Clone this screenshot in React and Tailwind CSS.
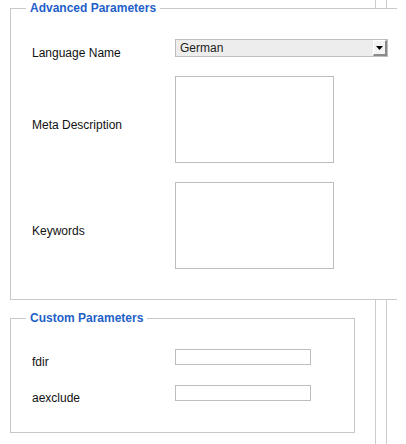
import React from 'react'

function Row({ label, top, children }) {
  return (
    <div className={`flex items-center pl-[21px] ${top}`}>
      <div className="w-[143px] mt-[10px] leading-4 text-[12px] text-[#111]">{label}</div>
      {children}
    </div>
  )
}

function Legend({ children }) {
  return (
    <legend className="ml-[15px] px-1 leading-4 text-[12px] font-bold text-[#1f5fc9]">
      {children}
    </legend>
  )
}

export default function App() {
  return (
    <div className="relative w-[406px] h-[444px] overflow-hidden bg-white font-['Liberation_Sans',Arial,sans-serif]">
      {/* frame lines behind the panels */}
      <div className="absolute top-0 bottom-0 left-[375px] w-px bg-[#cccccc]" />
      <div className="absolute top-0 bottom-0 left-[386px] w-px bg-[#cccccc]" />

      <div className="relative pl-[10px]">
        <fieldset className="w-[387px] border border-r-0 border-[#c8c8c8] bg-white p-0 pb-[30px]">
          <Legend>Advanced Parameters</Legend>
          <Row label="Language Name" top="mt-[19px]">
            <div className="flex h-[18px] w-[213px] items-center justify-between border border-[#bdbdbd] bg-[#ededed]">
              <span className="pl-[4px] text-[12px] leading-4 text-[#222]">German</span>
              <span className="flex h-[16px] w-[14px] items-center justify-center border-r-2 border-b-2 border-[#8a8a8a] border-t border-l border-t-white border-l-white bg-[#f4f4f4]">
                <svg width="7" height="4" viewBox="0 0 7 4">
                  <path d="M0 0h7L3.5 4z" fill="#000" />
                </svg>
              </span>
            </div>
          </Row>
          <Row label="Meta Description" top="mt-[15px]">
            <textarea className="h-[87px] w-[159px] resize-none border border-[#bdbdbd] bg-white" />
          </Row>
          <Row label="Keywords" top="mt-[19px]">
            <textarea className="h-[87px] w-[159px] resize-none border border-[#bdbdbd] bg-white" />
          </Row>
        </fieldset>

        <fieldset className="mt-[10px] w-[345px] border border-[#c8c8c8] bg-white p-0 pb-[26px]">
          <Legend>Custom Parameters</Legend>
          <Row label="fdir" top="mt-[18px]">
            <input className="h-[16px] w-[136px] border border-[#bdbdbd] bg-white" />
          </Row>
          <Row label="aexclude" top="mt-[10px]">
            <input className="h-[16px] w-[136px] border border-[#bdbdbd] bg-white" />
          </Row>
        </fieldset>
      </div>
    </div>
  )
}
